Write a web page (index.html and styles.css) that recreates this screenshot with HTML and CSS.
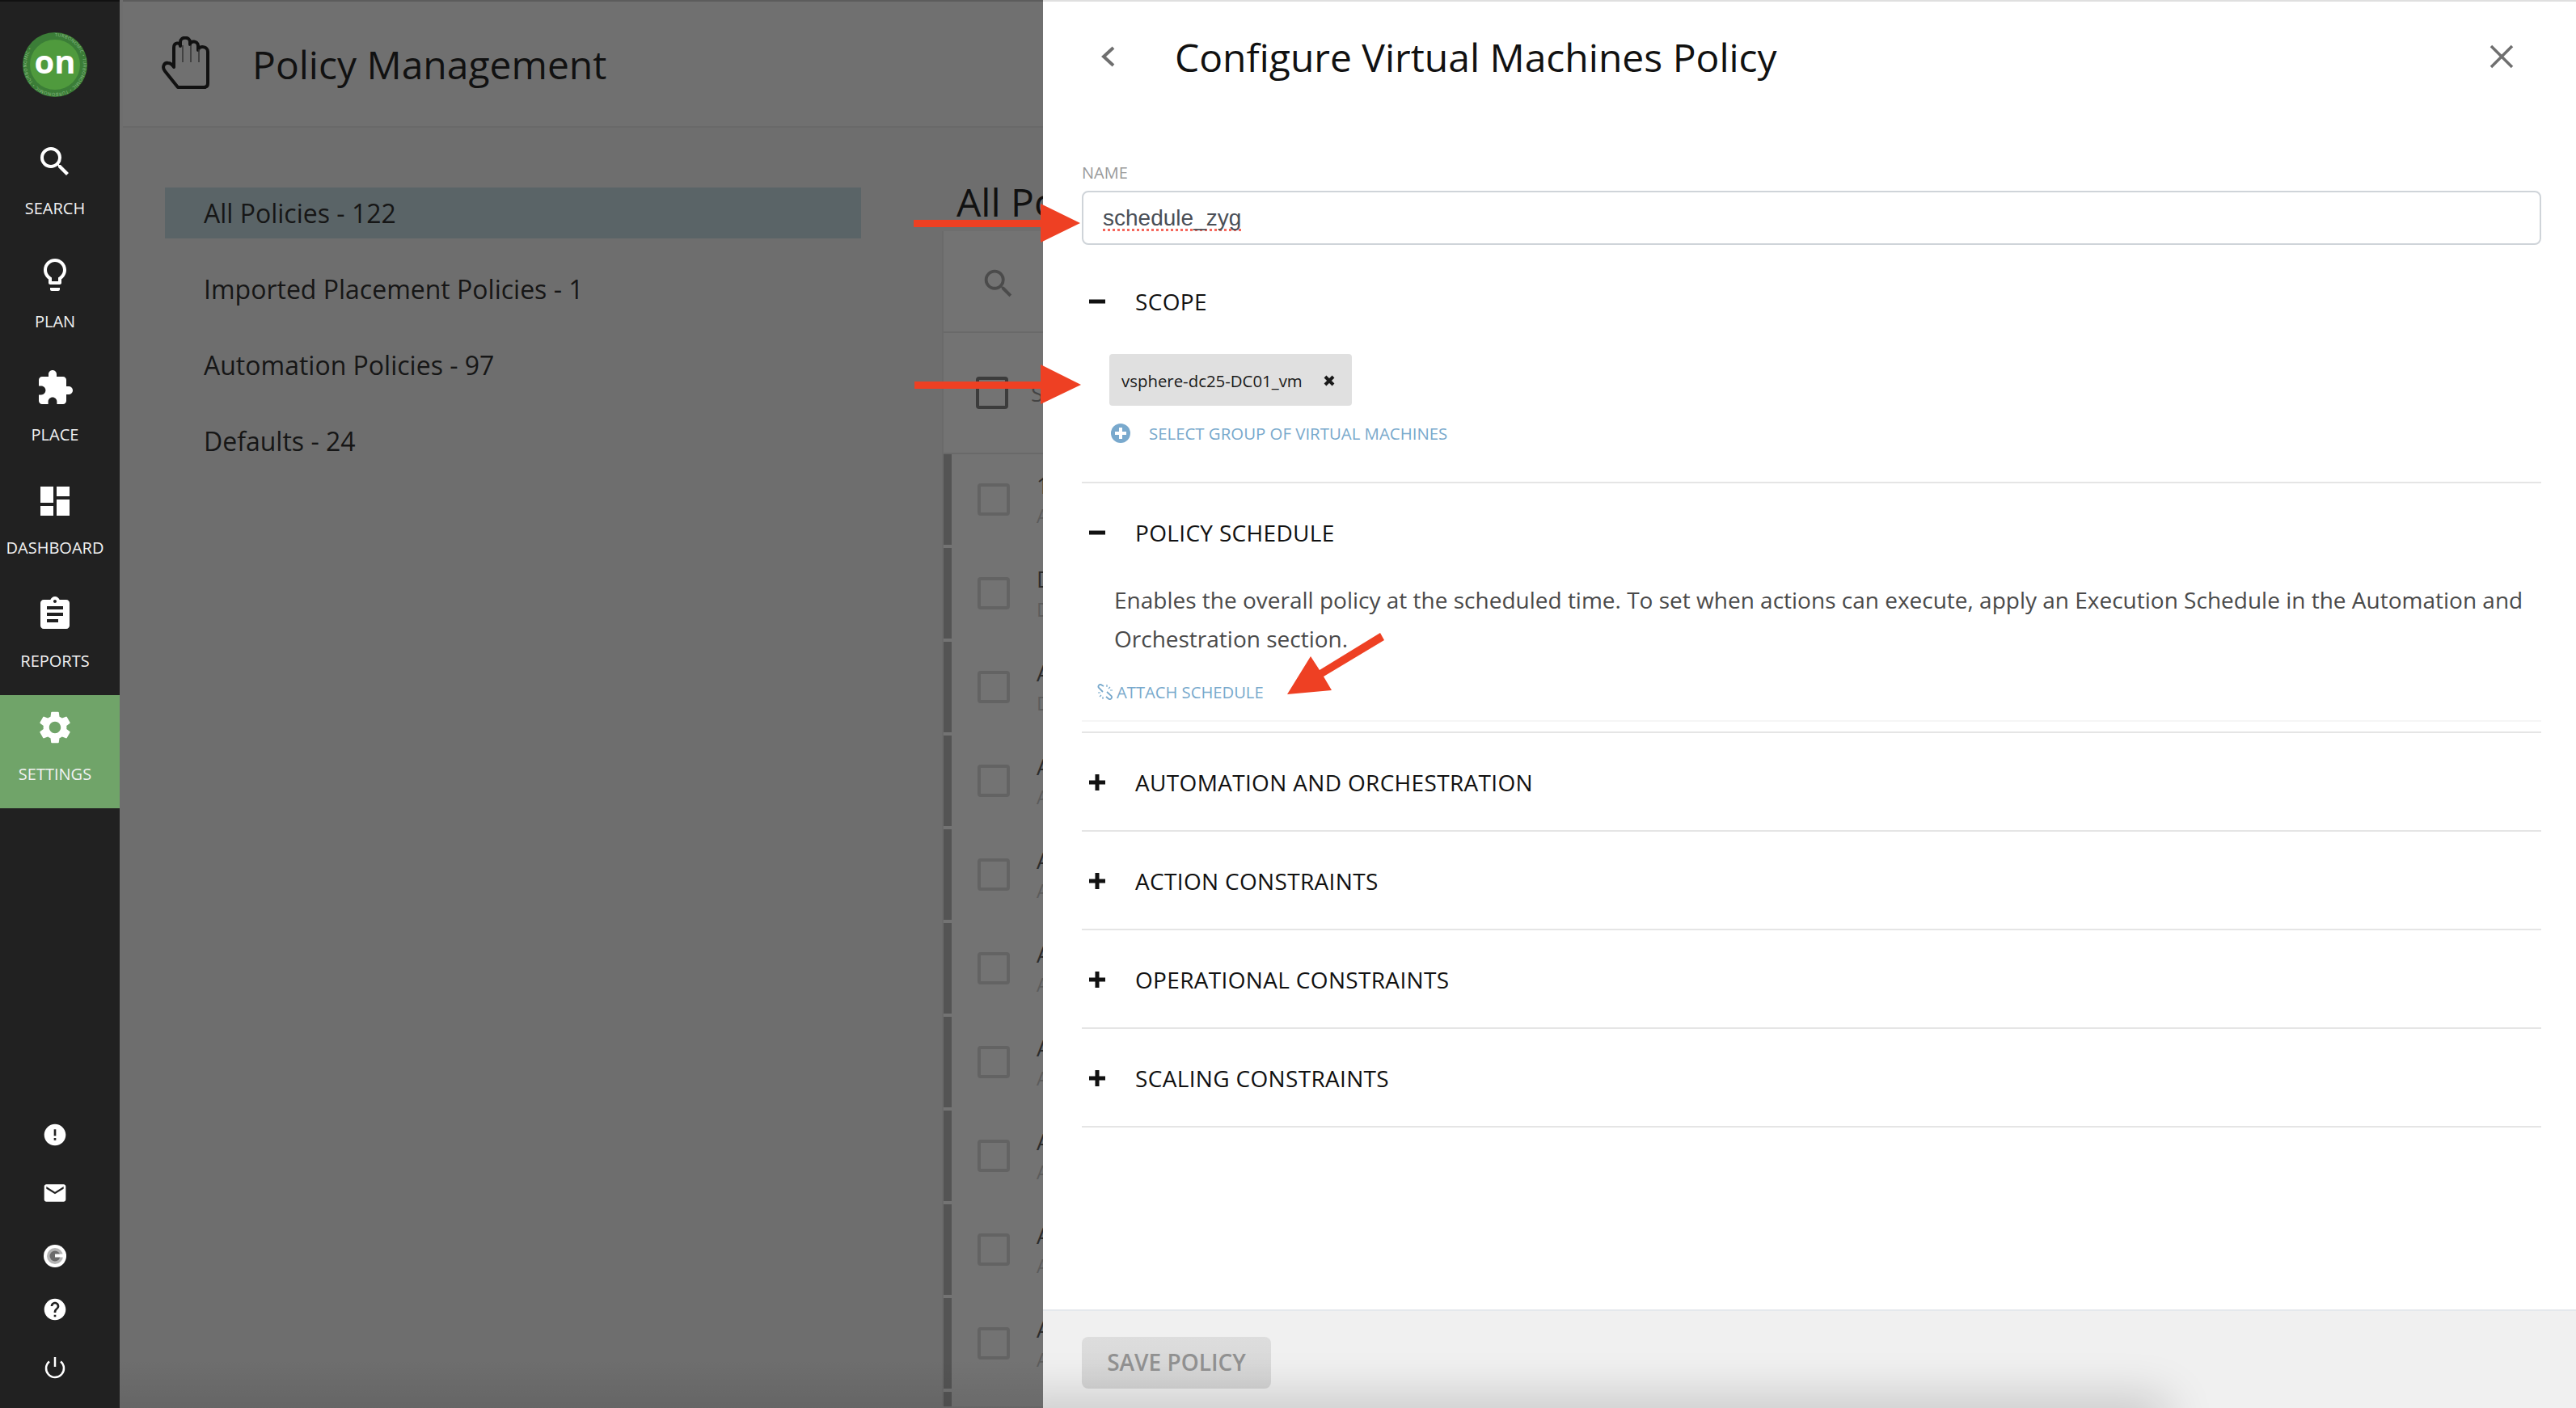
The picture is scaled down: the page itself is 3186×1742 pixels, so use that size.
FILE: index.html
```html
<!DOCTYPE html>
<html lang="en">
<head>
    <meta charset="UTF-8">
    <meta name="viewport" content="width=device-width, initial-scale=1.0">
    <title>Policy Management</title>
    <link rel="stylesheet" href="styles.css">
</head>
<body>
    <div class="app">
        <aside class="sidebar">
            <div class="logo">
                <svg width="80" height="80" viewBox="0 0 80 80">
                    <defs><path id="ring" d="M40 5a35 35 0 1 1 -0.01 0"/></defs>
                    <circle cx="40" cy="40" r="40" fill="#3b7d37"/>
                    <circle cx="40" cy="40" r="31" fill="#4f9a3d"/>
                    <text class="logo-ring"><textPath href="#ring">TURBONOMIC • TURBONOMIC • TURBONOMIC • TURBONOMIC •</textPath></text>
                    <text class="logo-on" x="40" y="51" text-anchor="middle">on</text>
                </svg>
            </div>
            <nav class="nav">
                <a class="nav-item">
                    <svg class="nav-icon" viewBox="0 0 24 24"><path d="M15.5 14h-.79l-.28-.27A6.471 6.471 0 0 0 16 9.5 6.5 6.5 0 1 0 9.5 16c1.61 0 3.09-.59 4.23-1.57l.27.28v.79l5 4.99L20.49 19l-4.99-5zm-6 0C7.01 14 5 11.99 5 9.5S7.01 5 9.5 5 14 7.01 14 9.5 11.99 14 9.5 14z"/></svg>
                    <span>SEARCH</span>
                </a>
                <a class="nav-item">
                    <svg class="nav-icon" viewBox="0 0 24 24"><path d="M9 21c0 .55.45 1 1 1h4c.55 0 1-.45 1-1v-1H9v1zm3-19C8.14 2 5 5.14 5 9c0 2.38 1.19 4.47 3 5.74V17c0 .55.45 1 1 1h6c.55 0 1-.45 1-1v-2.26c1.81-1.27 3-3.36 3-5.74 0-3.86-3.14-7-7-7zm2.85 11.1l-.85.6V16h-4v-2.3l-.85-.6C7.8 12.16 7 10.63 7 9c0-2.76 2.24-5 5-5s5 2.24 5 5c0 1.63-.8 3.16-2.15 4.1z"/></svg>
                    <span>PLAN</span>
                </a>
                <a class="nav-item">
                    <svg class="nav-icon" viewBox="0 0 24 24"><path d="M20.5 11H19V7c0-1.1-.9-2-2-2h-4V3.5C13 2.12 11.88 1 10.5 1S8 2.12 8 3.5V5H4c-1.1 0-1.99.9-1.99 2v3.8H3.5c1.49 0 2.7 1.21 2.7 2.7s-1.21 2.7-2.7 2.7H2V20c0 1.1.9 2 2 2h3.8v-1.5c0-1.49 1.21-2.7 2.7-2.7 1.49 0 2.7 1.21 2.7 2.7V22H17c1.1 0 2-.9 2-2v-4h1.5c1.38 0 2.5-1.12 2.5-2.5S21.88 11 20.5 11z"/></svg>
                    <span>PLACE</span>
                </a>
                <a class="nav-item">
                    <svg class="nav-icon" viewBox="0 0 24 24"><path d="M3 13h8V3H3v10zm0 8h8v-6H3v6zm10 0h8V11h-8v10zm0-18v6h8V3h-8z"/></svg>
                    <span>DASHBOARD</span>
                </a>
                <a class="nav-item">
                    <svg class="nav-icon" viewBox="0 0 24 24"><path d="M19 3h-4.18C14.4 1.84 13.3 1 12 1c-1.3 0-2.4.84-2.82 2H5c-1.1 0-2 .9-2 2v14c0 1.1.9 2 2 2h14c1.1 0 2-.9 2-2V5c0-1.1-.9-2-2-2zm-7 0c.55 0 1 .45 1 1s-.45 1-1 1-1-.45-1-1 .45-1 1-1zm2 14H7v-2h7v2zm3-4H7v-2h10v2zm0-4H7V7h10v2z"/></svg>
                    <span>REPORTS</span>
                </a>
                <a class="nav-item active">
                    <svg class="nav-icon" viewBox="0 0 24 24"><path d="M19.14 12.94c.04-.3.06-.61.06-.94 0-.32-.02-.64-.07-.94l2.03-1.58a.49.49 0 0 0 .12-.61l-1.92-3.32a.488.488 0 0 0-.59-.22l-2.39.96c-.5-.38-1.03-.7-1.62-.94l-.36-2.54a.484.484 0 0 0-.48-.41h-3.84c-.24 0-.43.17-.47.41l-.36 2.54c-.59.24-1.13.57-1.62.94l-2.39-.96c-.22-.08-.47 0-.59.22L2.74 8.87c-.12.21-.08.47.12.61l2.03 1.58c-.05.3-.09.63-.09.94s.02.64.07.94l-2.03 1.58a.49.49 0 0 0-.12.61l1.92 3.32c.12.22.37.29.59.22l2.39-.96c.5.38 1.03.7 1.62.94l.36 2.54c.05.24.24.41.48.41h3.84c.24 0 .44-.17.47-.41l.36-2.54c.59-.24 1.13-.56 1.62-.94l2.39.96c.22.08.47 0 .59-.22l1.92-3.32c.12-.22.07-.47-.12-.61l-2.01-1.58zM12 15.6c-1.98 0-3.6-1.62-3.6-3.6s1.62-3.6 3.6-3.6 3.6 1.62 3.6 3.6-1.62 3.6-3.6 3.6z"/></svg>
                    <span>SETTINGS</span>
                </a>
            </nav>
            <div class="util">
                <div class="util-item">
                    <svg width="32" height="32" viewBox="0 0 24 24"><path d="M12 2C6.48 2 2 6.48 2 12s4.48 10 10 10 10-4.48 10-10S17.52 2 12 2zm1 15h-2v-2h2v2zm0-4h-2V7h2v6z"/></svg>
                </div>
                <div class="util-item">
                    <svg width="32" height="32" viewBox="0 0 24 24"><path d="M20 4H4c-1.1 0-1.99.9-1.99 2L2 18c0 1.1.9 2 2 2h16c1.1 0 2-.9 2-2V6c0-1.1-.9-2-2-2zm0 4l-8 5-8-5V6l8 5 8-5v2z"/></svg>
                </div>
                <div class="util-item util-g">
                    <svg width="32" height="32" viewBox="0 0 32 32">
                        <circle cx="16" cy="16" r="14" fill="#fff"/>
                        <circle cx="16" cy="16" r="10" fill="#b4b4b4"/>
                        <circle cx="16" cy="16" r="6.500" fill="#6a6a6a"/>
                        <path d="M16 13.500h14v4H16z" fill="#fff"/>
                    </svg>
                </div>
                <div class="util-item util-help">
                    <svg width="32" height="32" viewBox="0 0 24 24"><path d="M12 2C6.48 2 2 6.48 2 12s4.48 10 10 10 10-4.48 10-10S17.52 2 12 2zm1 17h-2v-2h2v2zm2.070-7.750l-.9.920C13.450 12.900 13 13.500 13 15h-2v-.5c0-1.100.450-2.100 1.170-2.830l1.240-1.260c.370-.360.590-.860.590-1.410 0-1.100-.9-2-2-2s-2 .9-2 2H8c0-2.210 1.790-4 4-4s4 1.790 4 4c0 .880-.360 1.680-.930 2.250z"/></svg>
                </div>
                <div class="util-item util-power">
                    <svg width="32" height="32" viewBox="0 0 32 32" fill="none" stroke="#fff" stroke-width="2.500"><path d="M9 8.500a11 11 0 1 0 14 0"/><path d="M16 3v12"/></svg>
                </div>
            </div>
        </aside>

        <main class="main">
            <header class="page-head">
                <svg class="hand" width="60" height="66" viewBox="0 0 60 66" fill="none" stroke="#111" stroke-width="4" stroke-linejoin="round">
                    <path d="M21 63 5 43C1 38 4 32 9 33c3 0 5 2 7 5V14c0-7 8-7 8-2V7c0-7 12-7 12 0v3c0-5 10-5 10 2v5c1-6 12-5 12 2v39c0 4-2 5-5 5z"/>
                    <path d="M27 11v21M37 11v21M47 16v16" stroke="#333" stroke-width="1.500"/>
                </svg>
                <h1>Policy Management</h1>
            </header>
            <div class="page-body">
                <ul class="policy-types">
                    <li class="selected">All Policies - 122</li>
                    <li>Imported Placement Policies - 1</li>
                    <li>Automation Policies - 97</li>
                    <li>Defaults - 24</li>
                </ul>
                <section class="policies">
                    <h2>All Po</h2>
                    <div class="card">
                        <div class="card-search">
                            <svg width="46" height="46" viewBox="0 0 24 24"><path d="M15.500 14h-.79l-.28-.27A6.471 6.471 0 0 0 16 9.500 6.500 6.500 0 1 0 9.500 16c1.610 0 3.090-.59 4.230-1.570l.27.280v.79l5 4.990L20.490 19l-4.990-5zm-6 0C7.010 14 5 11.990 5 9.500S7.010 5 9.500 5 14 7.010 14 9.500 11.990 14 9.500 14z"/></svg>
                        </div>
                        <div class="card-select">
                            <span class="check check-dark"></span>
                            <span>S</span>
                        </div>
                        <div class="row"><span class="check"></span><div><p class="row-title">1</p><p class="row-sub">A</p></div></div>
                        <div class="row"><span class="check"></span><div><p class="row-title">D</p><p class="row-sub">D</p></div></div>
                        <div class="row"><span class="check"></span><div><p class="row-title">A</p><p class="row-sub">D</p></div></div>
                        <div class="row"><span class="check"></span><div><p class="row-title">A</p><p class="row-sub">A</p></div></div>
                        <div class="row"><span class="check"></span><div><p class="row-title">A</p><p class="row-sub">A</p></div></div>
                        <div class="row"><span class="check"></span><div><p class="row-title">A</p><p class="row-sub">A</p></div></div>
                        <div class="row"><span class="check"></span><div><p class="row-title">A</p><p class="row-sub">A</p></div></div>
                        <div class="row"><span class="check"></span><div><p class="row-title">A</p><p class="row-sub">A</p></div></div>
                        <div class="row"><span class="check"></span><div><p class="row-title">A</p><p class="row-sub">A</p></div></div>
                        <div class="row"><span class="check"></span><div><p class="row-title">A</p><p class="row-sub">A</p></div></div>
                        <div class="row row-end"></div>
                    </div>
                </section>
            </div>
            <div class="page-shade"></div>
        </main>
    </div>

    <div class="panel">
        <div class="panel-head">
            <svg class="back" width="20" height="28" viewBox="0 0 20 28" fill="none" stroke="#6f6f6f" stroke-width="4"><path d="M17 3 5 14l12 11"/></svg>
            <h2>Configure Virtual Machines Policy</h2>
            <svg class="close" width="30" height="30" viewBox="0 0 30 30" fill="none" stroke="#6f6f6f" stroke-width="3.500"><path d="M2 2l26 26M28 2 2 28"/></svg>
        </div>
        <div class="panel-content">
            <label class="field-label">NAME</label>
            <div class="name-input"><span>schedule_zyg</span></div>

            <div class="section">
                <div class="section-head">
                    <svg class="toggle" width="20" height="20" viewBox="0 0 20 20"><path d="M0 7.500h20v5H0z"/></svg>
                    <span>SCOPE</span>
                </div>
                <div class="scope-body">
                    <div class="chip">
                        <span>vsphere-dc25-DC01_vm</span>
                        <svg width="14" height="14" viewBox="0 0 14 14" fill="none" stroke="#1a1a1a" stroke-width="4"><path d="M2 2l10 10M12 2 2 12"/></svg>
                    </div>
                    <div class="link link-group">
                        <svg width="24" height="24" viewBox="0 0 24 24"><circle cx="12" cy="12" r="12" fill="#79a9cd"/><path d="M10 5h4v5h5v4h-5v5h-4v-5H5v-4h5z" fill="#fff"/></svg>
                        <span>SELECT GROUP OF VIRTUAL MACHINES</span>
                    </div>
                </div>
            </div>

            <div class="section">
                <div class="section-head">
                    <svg class="toggle" width="20" height="20" viewBox="0 0 20 20"><path d="M0 7.500h20v5H0z"/></svg>
                    <span>POLICY SCHEDULE</span>
                </div>
                <p class="section-desc">Enables the overall policy at the scheduled time. To set when actions can execute, apply an Execution Schedule in the Automation and Orchestration section.</p>
                <div class="link link-attach">
                    <svg width="20" height="20" viewBox="0 0 20 20" fill="none" stroke="#78a9cc" stroke-width="1.800"><path d="M8 3 5.500 1.500a2.500 2.500 0 0 0-3.500 3.500L7 10M12 10l5.500 5a2.500 2.500 0 0 1-3.500 3.500L11 16"/><path d="M12 1v3M16 4l-2 2M19 8h-3M1 11h3M3 16l2-2M7 19v-3" stroke-width="1.200"/></svg>
                    <span>ATTACH SCHEDULE</span>
                </div>
            </div>

            <div class="section">
                <div class="section-head">
                    <svg class="toggle" width="20" height="20" viewBox="0 0 20 20"><path d="M7.500 0h5v7.500H20v5h-7.500V20h-5v-7.500H0v-5h7.500z"/></svg>
                    <span>AUTOMATION AND ORCHESTRATION</span>
                </div>
            </div>
            <div class="section">
                <div class="section-head">
                    <svg class="toggle" width="20" height="20" viewBox="0 0 20 20"><path d="M7.500 0h5v7.500H20v5h-7.500V20h-5v-7.500H0v-5h7.500z"/></svg>
                    <span>ACTION CONSTRAINTS</span>
                </div>
            </div>
            <div class="section">
                <div class="section-head">
                    <svg class="toggle" width="20" height="20" viewBox="0 0 20 20"><path d="M7.500 0h5v7.500H20v5h-7.500V20h-5v-7.500H0v-5h7.500z"/></svg>
                    <span>OPERATIONAL CONSTRAINTS</span>
                </div>
            </div>
            <div class="section">
                <div class="section-head">
                    <svg class="toggle" width="20" height="20" viewBox="0 0 20 20"><path d="M7.500 0h5v7.500H20v5h-7.500V20h-5v-7.500H0v-5h7.500z"/></svg>
                    <span>SCALING CONSTRAINTS</span>
                </div>
            </div>
        </div>
        <div class="panel-foot">
            <button class="save" disabled>SAVE POLICY</button>
            <div class="foot-shade"></div>
        </div>
    </div>

    <!-- red annotation arrows drawn on top of the screenshot -->
    <svg class="arrows" width="3186" height="1742" viewBox="0 0 3186 1742" fill="#ee4023">
        <polygon points="1130,272 1287,272 1287,252 1336,276 1287,300 1287,281 1130,281"/>
        <polygon points="1131,472 1287,472 1287,451 1337,476 1287,500 1287,481 1131,481"/>
        <polygon points="1707,783 1712,792 1637,837 1647,854 1592,859 1621,812 1632,829"/>
    </svg>
</body>
</html>
```

FILE: styles.css
```css
* {
    box-sizing: border-box;
}

html, body {
    margin: 0;
    height: 100%;
    overflow: hidden;
}

body {
    font-family: "Open Sans", "Liberation Sans", sans-serif;
    background-color: #6e6e6e;
    color: #111;
}

h1, h2, p, ul {
    margin: 0;
    padding: 0;
    font-weight: 400;
}

.app {
    display: flex;
    height: 1742px;
    overflow: hidden;
}

/* left nav */
.sidebar {
    width: 148px;
    flex-shrink: 0;
    display: flex;
    flex-direction: column;
    background-color: #212121;
    border-top: 2px solid #111;
    color: #fff;
}

.logo {
    height: 158px;
    width: 136px;
    padding-top: 38px;
    display: flex;
    justify-content: center;
}

.logo-ring {
    font-size: 5.500px;
    letter-spacing: 0.4px;
    fill: #8fbf8b;
}

.logo-on {
    font-size: 40px;
    font-weight: 700;
    fill: #fff;
}

.nav-item {
    height: 140px;
    padding-top: 16px;
    padding-right: 12px;
    display: flex;
    flex-direction: column;
    align-items: center;
    font-size: 20px;
    line-height: 28px;
    color: #f2f2f2;
}

.nav-item.active {
    background-color: #70a469;
}

.nav-icon {
    width: 48px;
    height: 48px;
    margin-bottom: 20px;
    fill: #fff;
}

.util {
    margin-top: auto;
    padding-bottom: 2px;
}

.util-item {
    width: 136px;
    height: 72px;
    display: flex;
    align-items: center;
    justify-content: center;
}

.util-item svg {
    fill: #fff;
}

.util-g {
    height: 84px;
}

.util-help {
    height: 48px;
}

.util-power {
    height: 96px;
}

.util-power svg {
    fill: none;
}

/* page behind the panel, dimmed colours */
.main {
    position: relative;
    flex: 1;
    min-width: 0;
    height: 1742px;
    overflow: hidden;
}

.page-head {
    height: 158px;
    margin-left: 4px;
    padding-left: 47px;
    display: flex;
    align-items: center;
    background-color: #707070;
    border-top: 2px solid #5c5c5c;
    border-bottom: 2px solid #696969;
}

.page-head h1 {
    margin-left: 53px;
    font-size: 48px;
    color: #111;
}

.hand {
    margin-top: -2px;
}

.page-body {
    display: flex;
    padding-left: 56px;
    padding-top: 74px;
}

.policy-types {
    width: 861px;
    flex-shrink: 0;
    list-style: none;
    font-size: 32px;
}

.policy-types li {
    height: 63px;
    line-height: 63px;
    margin-bottom: 31px;
    padding-left: 48px;
    color: #161616;
}

.policy-types li.selected {
    background-color: #5a6467;
}

/* only the part left of the panel is ever visible */
.policies {
    margin-left: 100px;
    width: 125px;
    flex-shrink: 0;
    overflow: hidden;
    white-space: nowrap;
}

.policies h2 {
    height: 54px;
    margin-left: 18px;
    font-size: 48px;
    line-height: 35px;
    color: #111;
}

.card {
    background-color: #737373;
    border-left: 2px solid #6a6a6a;
}

.card-search {
    height: 126px;
    padding: 42px 0 0 45px;
    border-bottom: 2px solid #696969;
}

.card-search svg {
    fill: #4b4b4b;
}

.card-select {
    height: 150px;
    padding-left: 40px;
    display: flex;
    align-items: center;
    gap: 28px;
    font-size: 28px;
    color: #444;
    border-bottom: 2px solid #696969;
}

.check {
    width: 40px;
    height: 40px;
    flex-shrink: 0;
    border: 4px solid #636363;
    border-radius: 4px;
}

.check-dark {
    border-color: #3c3c3c;
}

.row {
    height: 112px;
    margin-bottom: 4px;
    padding-left: 32px;
    display: flex;
    align-items: center;
    gap: 33px;
    border-left: 10px solid #545454;
}

.row-end {
    height: 18px;
    margin-bottom: 0;
}

.row-title {
    font-size: 28px;
    line-height: 40px;
    color: #2c2c2c;
}

.row-sub {
    font-size: 24px;
    line-height: 36px;
    color: #5c5c5c;
}

.page-shade {
    position: absolute;
    left: 0;
    right: 0;
    bottom: 0;
    height: 60px;
    background: linear-gradient(rgba(0, 0, 0, 0), rgba(0, 0, 0, 0.08));
}

/* slide-in panel */
.panel {
    position: absolute;
    top: 0;
    left: 1290px;
    width: 1896px;
    height: 1742px;
    display: flex;
    flex-direction: column;
    background-color: #fff;
    border-top: 2px solid #dfdfdf;
}

.panel-head {
    height: 200px;
    padding: 37px 0 0 70px;
    display: flex;
    align-items: flex-start;
    flex-shrink: 0;
}

.back {
    margin-top: 17px;
}

.panel-head h2 {
    margin-left: 73px;
    font-size: 48px;
    line-height: 66px;
    margin-top: -1px;
    color: #111;
}

.close {
    margin-left: auto;
    margin-right: 77px;
    margin-top: 16px;
}

.panel-content {
    flex: 1;
    min-height: 0;
    padding: 0 43px 0 48px;
    overflow: hidden;
}

.field-label {
    display: block;
    font-size: 20px;
    line-height: 24px;
    color: #9a9a9a;
}

.name-input {
    height: 67px;
    margin-top: 10px;
    padding-left: 24px;
    border: 2px solid #cfd4d9;
    border-radius: 8px;
    font-family: "Liberation Sans", sans-serif;
    font-size: 28px;
    color: #4a4f57;
    display: flex;
    align-items: center;
}

.name-input span {
    display: block;
    padding-top: 4px;
    line-height: 26px;
    border-bottom: 3px dotted #f5675c;
}

.section {
    border-bottom: 2px solid #e5e5e5;
}

.name-input + .section {
    margin-top: 9px;
}

.section-head {
    height: 120px;
    padding-top: 2px;
    display: flex;
    align-items: center;
    font-size: 28px;
    font-weight: 500;
    letter-spacing: 0.33px;
    color: #111;
}

.toggle {
    margin-left: 9px;
    margin-right: 37px;
    fill: #111;
}

.scope-body {
    padding: 6px 0 42px 34px;
}

.chip {
    width: 300px;
    height: 64px;
    padding: 2px 0 0 15px;
    display: flex;
    align-items: center;
    gap: 26px;
    background-color: #e0e0e0;
    border-radius: 4px;
    font-size: 20.400px;
    color: #1a1a1a;
}

.link {
    display: flex;
    align-items: center;
    font-size: 20.400px;
    line-height: 36px;
    color: #78a9cc;
}

.link-group {
    margin-top: 16px;
    gap: 23px;
    padding-left: 2px;
}

.section-desc {
    padding-left: 40px;
    font-size: 28px;
    line-height: 48px;
    color: #4a4a4a;
}

.link-attach {
    margin-top: 24px;
    margin-bottom: 12px;
    padding: 0 0 17px 19px;
    gap: 4px;
    font-size: 20.200px;
    border-bottom: 2px solid #f5f5f5;
}

.panel-foot {
    position: relative;
    height: 122px;
    flex-shrink: 0;
    padding: 32px 0 0 48px;
    background-color: #f0f0f0;
    border-top: 2px solid #e4e8ec;
    overflow: hidden;
}

.save {
    width: 234px;
    height: 64px;
    padding: 0 0 3px;
    border: none;
    border-radius: 8px;
    background: linear-gradient(#dddddd, #d5d5d5);
    font-family: inherit;
    font-size: 28px;
    font-weight: 600;
    color: #929292;
}

.foot-shade {
    position: absolute;
    left: -40px;
    bottom: -30px;
    width: 1420px;
    height: 30px;
    box-shadow: 0 0 60px 10px rgba(0, 0, 0, 0.2);
}

.arrows {
    position: absolute;
    top: 0;
    left: 0;
    pointer-events: none;
}
```
